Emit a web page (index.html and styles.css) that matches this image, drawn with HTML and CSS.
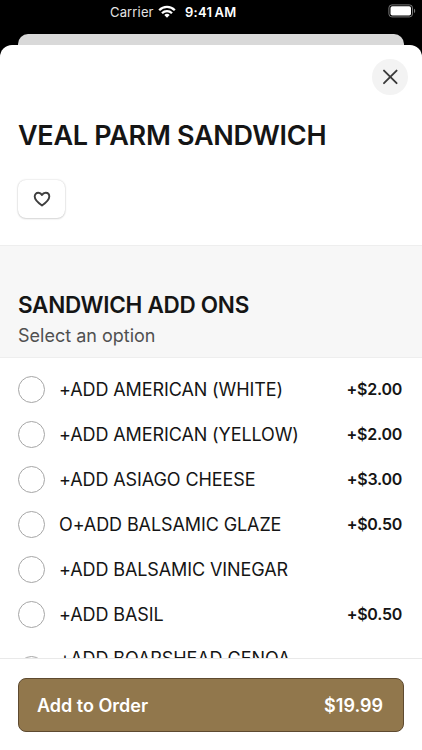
FILE: index.html
```html
<!DOCTYPE html>
<html lang="en">
<head>
<meta charset="utf-8">
<title>Veal Parm Sandwich</title>
<link rel="stylesheet" href="styles.css">
</head>
<body>
<div class="screen">
  <header class="status">
    <div class="status-center">
      <span class="carrier">Carrier</span>
      <svg class="wifi" width="18" height="14" viewBox="0 0 18 14" fill="none" stroke="#fff" stroke-width="2.3"><path d="M1.2 5.2a11 11 0 0 1 15.6 0M4 8.3a7 7 0 0 1 10 0"/><path d="M9 12.7 6.3 10a3.9 3.9 0 0 1 5.4 0z" fill="#fff" stroke="none"/></svg>
      <span class="clock">9:41 AM</span>
    </div>
    <svg class="battery" width="28" height="14" viewBox="0 0 28 14"><rect x=".9" y=".9" width="23.6" height="12" rx="3" fill="none" stroke="#777"/><rect x="2.5" y="2.3" width="20.5" height="9.2" rx="1.8" fill="#fff"/><path d="M26 4.8v4.4c1.6-.6 1.6-3.8 0-4.4z" fill="#777"/></svg>
  </header>
  <div class="backdrop-sheet"></div>
  <main class="sheet">
    <div class="sheet-top">
      <button class="close" aria-label="Close"><svg width="36" height="36" viewBox="0 0 36 36" fill="none" stroke="#3b3b3b" stroke-width="1.9" stroke-linecap="round"><path d="m12 11.6 12.600 12.600M24.600 11.600 12 24.200"/></svg></button>
    </div>
    <h1 class="title">VEAL PARM SANDWICH</h1>
    <button class="favorite" aria-label="Favorite"><svg width="18" height="16" viewBox="0 0 18 16" fill="none" stroke="#3f3f3f" stroke-width="1.9" stroke-linejoin="round"><path d="M9 14.500C6.200 12.600 1.700 9.400 1.700 5.600c0-2.200 1.500-3.900 3.600-3.900C7 1.700 8.300 2.600 9 4c.7-1.400 2-2.300 3.700-2.300 2.100 0 3.600 1.700 3.600 3.900 0 3.800-4.500 7-7.300 8.900z"/></svg></button>
    <section class="group-head">
      <h2 class="group-title">SANDWICH ADD ONS</h2>
      <p class="group-hint">Select an option</p>
    </section>
    <ul class="options">
      <li class="option"><span class="radio"></span><span class="name">+ADD AMERICAN (WHITE)</span><span class="price">+$2.00</span></li>
      <li class="option"><span class="radio"></span><span class="name">+ADD AMERICAN (YELLOW)</span><span class="price">+$2.00</span></li>
      <li class="option"><span class="radio"></span><span class="name">+ADD ASIAGO CHEESE</span><span class="price">+$3.00</span></li>
      <li class="option"><span class="radio"></span><span class="name">O+ADD BALSAMIC GLAZE</span><span class="price">+$0.50</span></li>
      <li class="option"><span class="radio"></span><span class="name">+ADD BALSAMIC VINEGAR</span></li>
      <li class="option"><span class="radio"></span><span class="name">+ADD BASIL</span><span class="price">+$0.50</span></li>
      <li class="option option-tall"><span class="radio"></span><span class="name">+ADD BOARSHEAD GENOA</span></li>
    </ul>
  </main>
  <footer class="order-bar">
    <button class="order"><span>Add to Order</span><span class="total">$19.99</span></button>
  </footer>
</div>
</body>
</html>
```

FILE: styles.css
```css
* { box-sizing: border-box; }
body { margin: 0; font-family: Inter, "Liberation Sans", sans-serif; color: #151515; }
h1, h2, p, ul { margin: 0; padding: 0; }
button { font: inherit; padding: 0; border: 0; }
svg { display: block; }
.screen { display: flex; flex-direction: column; width: 422px; height: 750px; overflow: hidden; background: #000; }
.status { display: flex; flex: none; justify-content: space-between; height: 34px; padding: 0 6px 0 110px; color: #fff; }
.status-center { display: flex; align-items: center; height: 24px; font-size: 13px; }
.carrier { width: 48px; color: #e4e4e4; letter-spacing: .15px; }
.clock { margin-left: 9px; font-weight: 600; letter-spacing: .3px; word-spacing: -1.6px; }
.battery { margin-top: 4px; }
.backdrop-sheet { flex: none; height: 11px; margin: 0 18px; border-radius: 10px 10px 0 0; background: #d9d9d9; }
.sheet { display: flex; flex: 1; flex-direction: column; min-height: 0; overflow: hidden; border-radius: 12px 12px 0 0; background: #fff; }
.sheet-top { display: flex; flex: none; justify-content: flex-end; height: 68px; padding: 14px 14px 0 0; }
.close { width: 36px; height: 36px; border-radius: 50%; background: #f3f3f3; }
.title { flex: none; height: 67px; padding-left: 18px; font-size: 27px; font-weight: 600; line-height: 45px; letter-spacing: -.29px; white-space: nowrap; }
.favorite { display: flex; flex: none; align-items: center; justify-content: center; width: 47px; height: 38px; margin: 0 0 27px 18px; border-radius: 8px; background: #fff; box-shadow: 0 0 2px rgba(0,0,0,.2), 0 1px 2px rgba(0,0,0,.12); }
.group-head { flex: none; height: 113px; padding: 43px 18px 0; border-top: 1px solid #eee; border-bottom: 1px solid #eee; background: #f7f7f7; }
.group-title { font-size: 22.5px; font-weight: 600; line-height: 32px; letter-spacing: -.28px; }
.group-hint { margin-top: 1px; color: #505050; font-size: 18px; line-height: 28px; }
.options { flex: none; padding: 9px 20px 0 18px; list-style: none; }
.option { display: flex; align-items: center; height: 45px; }
.radio { flex: none; width: 27px; height: 27px; margin: 0 14px 1px 0; border: 1px solid #a6a6a6; border-radius: 50%; }
.name { flex: 1; font-size: 18px; line-height: 24px; letter-spacing: -.1px; white-space: nowrap; }
.price { padding-bottom: 2px; font-size: 16px; font-weight: 600; letter-spacing: -.25px; }
.option-tall { align-items: flex-start; padding-top: 10px; }
.option-tall .radio { margin-top: 9px; }
.order-bar { flex: none; height: 92px; padding: 19px 18px 0; border-top: 1px solid #e9e9e9; background: #fff; }
.order { display: flex; align-items: center; justify-content: space-between; width: 100%; height: 54px; padding: 0 20px 0 18px; border: 1px solid #5e4a30; border-radius: 8px; background: #91774c; color: #fff; font-size: 18px; font-weight: 600; }
```
